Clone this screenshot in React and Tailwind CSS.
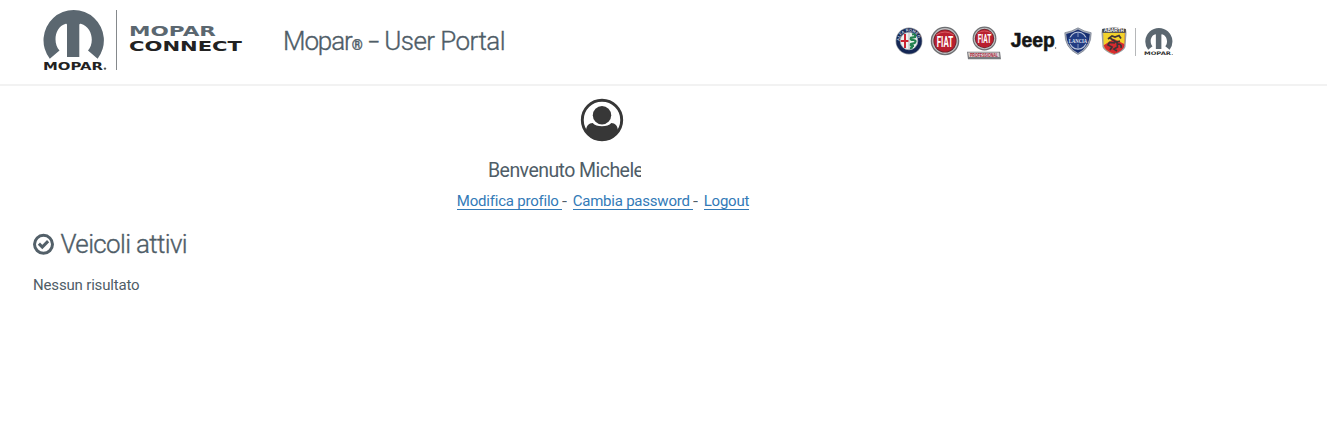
const MoparMark = ({ className }) => (
  <svg viewBox="0 0 62 49" className={className} fill="#5b6770">
    <path d="M6.8 48.7A30.2 30.2 0 1 1 54.6 48.7L45 40.5C51.5 34 50 17 37.8 13.7Q36.3 13.4 36.3 15V47H24V15Q24 13.4 22.8 13.7C11 17 10 34 16.5 40.5Z" />
  </svg>
);

function MoparConnectLogo() {
  return (
    <div className="flex h-[62px] w-[202px] shrink-0">
      <div className="w-[66px]">
        <MoparMark className="block h-[49px] w-[62px]" />
        <svg viewBox="0 0 66 13" className="block h-[13px] w-[66px] overflow-visible">
          <text x="0" y="11" textLength="60" lengthAdjust="spacingAndGlyphs" fontFamily="DejaVu Sans" fontWeight="bold" fontSize="9.6" fill="#222">MOPAR</text>
          <circle cx="62" cy="9.6" r="1.2" fill="#555" />
        </svg>
      </div>
      <div className="ml-[7px] h-[60px] w-px bg-[#85898c]" />
      <svg viewBox="0 0 116 62" className="ml-3 h-[62px] w-[116px] shrink-0" fontFamily="DejaVu Sans" fontWeight="bold">
        <text x="0" y="26.3" textLength="87" lengthAdjust="spacingAndGlyphs" fontSize="14.6" fill="#5b6770">MOPAR</text>
        <text x="0" y="41" textLength="113" lengthAdjust="spacingAndGlyphs" fontSize="14.3" fill="#222">CONNECT</text>
      </svg>
    </div>
  );
}

const AlfaRomeo = () => (
  <svg viewBox="0 0 28 28" className="h-7 w-7 overflow-visible">
    <circle cx="14" cy="14" r="13.4" fill="#8e949d" />
    <circle cx="14" cy="14" r="12.7" fill="#142755" />
    <path id="alfa-arc" d="M4.5 14A9.5 9.5 0 0 1 23.5 14" fill="none" />
    <text fontFamily="Liberation Sans" fontWeight="bold" fontSize="3.9" fill="#c9d0dc" textLength="27">
      <textPath href="#alfa-arc">ALFA ROMEO</textPath>
    </text>
    <circle cx="14" cy="14" r="8.8" fill="#edf1ef" stroke="#a7adb5" strokeWidth=".7" />
    <path d="M10 7V21M5.8 14H13.5" stroke="#cb2532" strokeWidth="2" />
    <path d="M14 5.2V22.8" stroke="#8b9297" strokeWidth=".5" />
    <path d="M17 7.5Q21 6.5 20 10L16 10.8Q14.8 13 18.2 13Q22.2 13.3 19.6 16L16 17Q14.8 19.2 19 18.8M18 20.4Q15.5 20 16 22" fill="none" stroke="#23814f" strokeWidth="2.2" />
  </svg>
);

function FiatBadge({ className }) {
  return (
    <svg viewBox="0 0 30 30" className={className}>
      <circle cx="15" cy="15" r="14.3" fill="#6d6f72" />
      <circle cx="15" cy="15" r="12.9" fill="#bfc1c3" />
      <circle cx="15" cy="15" r="11.6" fill="#69252c" />
      <circle cx="15" cy="15" r="10.7" fill="#b91f2e" />
      <path d="M6 9Q15 3 24 9" fill="none" stroke="#d75c62" />
      <text x="6.8" y="20.8" textLength="16.4" lengthAdjust="spacingAndGlyphs" fontFamily="Roboto" fontWeight="bold" fontSize="15.5" fill="#fff">FIAT</text>
    </svg>
  );
}

const FiatProfessional = () => (
  <div className="flex w-9 flex-col items-center">
    <FiatBadge className="h-[25px] w-[25px] overflow-visible" />
    <svg viewBox="0 0 36 9" className="h-[9px] w-9 overflow-visible">
      <path d="M1 .7H34L35 8.3H2Z" fill="#77797d" />
      <path d="M2 1.4H33L33.5 6H3Z" fill="#d8cdd0" />
      <text x="4" y="5.7" textLength="28" lengthAdjust="spacingAndGlyphs" fontFamily="Liberation Sans" fontWeight="bold" fontSize="5.4" fill="#a92437">PROFESSIONAL</text>
    </svg>
  </div>
);

const Jeep = () => (
  <svg viewBox="0 0 47 28" className="h-7 w-[47px] overflow-visible">
    <text x=".8" y="19.8" textLength="44" lengthAdjust="spacingAndGlyphs" fontFamily="Liberation Sans" fontWeight="bold" fontSize="19.6" fill="#151515" stroke="#151515" strokeWidth=".6">Jeep</text>
    <circle cx="45.6" cy="21" r=".7" fill="#555" />
  </svg>
);

const Lancia = () => (
  <svg viewBox="0 0 28 28" className="h-7 w-7 overflow-visible">
    <path d="M.8 5.7Q8 4.5 14 .8Q20 4.5 27.2 5.7Q27.5 21 14 27.5Q.5 21 .8 5.7Z" fill="#a4abb8" stroke="#6b7384" strokeWidth=".6" />
    <path d="M2.2 7Q9 5.5 14 2.4Q19 5.5 25.8 7Q25.5 20 14 26Q2.5 20 2.2 7Z" fill="#172e70" />
    <circle cx="14" cy="13.7" r="8.5" fill="#213c82" stroke="#b8c3d9" strokeWidth="1.2" />
    <path d="M14 5V10M14 17V23" stroke="#91a2c7" strokeWidth=".9" />
    <path d="M4 10.5H24V16.7H4Z" fill="#213c82" />
    <text x="4.8" y="16" textLength="18.4" lengthAdjust="spacingAndGlyphs" fontFamily="Liberation Serif" fontWeight="bold" fontSize="7" fill="#e1e8f2">LANCIA</text>
  </svg>
);

const Abarth = () => (
  <svg viewBox="0 0 28 29" className="h-[29px] w-7 overflow-visible">
    <path d="M2 2Q14-1 26 2L26.5 6L25.5 20Q24 24.5 14 28Q4 24.5 2.5 20L1.5 6Z" fill="#9a9da0" />
    <path d="M3.2 5.7H14V26.8Q5 24 3.8 19Z" fill="#f3d32b" />
    <path d="M14 5.7H24.8L24.2 19Q23 24 14 26.8Z" fill="#d72b2f" />
    <path d="M3.7 18.2L14 11.8L24.3 18.2Q23 24 14 26.8Q5 24 3.7 18.2Z" fill="#d72b2f" />
    <path d="M14 5.7H24.8L24.3 17L14 12Z" fill="#f3d32b" />
    <path d="M2.3 2Q14-.5 25.7 2V5.8H2.3Z" fill="#444" />
    <text x="4" y="5.2" textLength="20" lengthAdjust="spacingAndGlyphs" fontFamily="Liberation Sans" fontWeight="bold" fontSize="4.7" fill="#fff">ABARTH</text>
    <path d="M8 12L12 9L15 10L19 8.5L21 11.5M10 11L16 15L20 14M17 15L17.5 20L14 22L17 24M15 16L9.5 15.5L8 18L12 20L10 23M18 17Q22 17 21 21" fill="none" stroke="#403536" strokeWidth="1.7" />
  </svg>
);

const BrandStrip = () => (
  <div className="mt-[27px] ml-auto mr-[154px] flex h-9 shrink-0 items-start">
    <AlfaRomeo />
    <FiatBadge className="-mt-px ml-[7px] h-[30px] w-[30px] overflow-visible" />
    <div className="ml-[6px] -mt-px"><FiatProfessional /></div>
    <div className="ml-2"><Jeep /></div>
    <div className="ml-[7px]"><Lancia /></div>
    <div className="ml-2"><Abarth /></div>
    <div className="ml-[7px] mt-px h-7 w-px bg-[#b5b7b9]" />
    <div className="ml-2 mt-px w-[29px]">
      <MoparMark className="mx-auto block h-[22px] w-7" />
      <svg viewBox="0 0 29 6" className="block h-[6px] w-[29px] overflow-visible">
        <text x="0" y="5" textLength="27" lengthAdjust="spacingAndGlyphs" fontFamily="DejaVu Sans" fontWeight="bold" fontSize="4.9" fill="#333">MOPAR</text>
        <circle cx="28.2" cy="4.5" r=".5" fill="#555" />
      </svg>
    </div>
  </div>
);

const UserIcon = () => (
  <svg viewBox="0 0 44 44" className="mr-0.5 h-11 w-11" fill="#373737">
    <circle cx="22" cy="22" r="19.7" fill="none" stroke="#373737" strokeWidth="2.9" />
    <circle cx="22" cy="17.3" r="9.2" />
    <path d="M6 32.3C6.5 28 8.7 25 12.7 25C14.5 27.3 18 28.3 22 28.3S29.5 27.3 31.3 25C35.3 25 37.5 28 38 32.3Q34 42.5 22 42.8Q10 42.5 6 32.3Z" />
  </svg>
);

const CheckCircle = () => (
  <svg viewBox="0 0 22 22" className="h-[22px] w-[22px]" fill="none" stroke="#536069">
    <circle cx="11.5" cy="11.3" r="9" strokeWidth="3" />
    <path d="M6.9 10.6L10.3 14L16.1 8.2" strokeWidth="3.1" />
  </svg>
);

const linkClass = "whitespace-pre border-b border-[#337ab7] text-[#337ab7]";

export default function App() {
  return (
    <div className="h-[436px] overflow-hidden bg-white font-['Roboto',sans-serif] text-[#4f5d67]">
      <header className="flex h-[86px] border-b-2 border-[#f2f2f2] pl-[43px]">
        <div className="pt-[10px]"><MoparConnectLogo /></div>
        <h1 className="mt-[25px] ml-[38px] text-[26px] leading-8 font-light tracking-[-0.55px] whitespace-nowrap [-webkit-text-stroke:0.35px]">
          <span className="tracking-[-1.1px]">Mopar</span>
          <span className="text-[14px] font-medium tracking-normal">®</span>{" "}
          <span className="mr-[2px] ml-px inline-block scale-x-150">-</span> User Portal
        </h1>
        <BrandStrip />
      </header>

      <section className="flex w-[1206px] flex-col items-center pt-3">
        <UserIcon />
        <div className="mt-[15px] mb-px w-[230px]">
          <p className="w-[152.5px] overflow-hidden text-[19.5px] leading-7 tracking-[-0.55px] whitespace-nowrap">Benvenuto Michele</p>
        </div>
        <nav className="mt-[9px] flex h-[15px] text-[15px] leading-[13px] tracking-[-0.22px]">
          <a href="#" className={linkClass}>Modifica profilo </a>
          <span className="w-[10.5px] origin-left scale-x-120">-</span>
          <a href="#" className={linkClass}>Cambia password </a>
          <span className="w-[10.5px] origin-left scale-x-120">-</span>
          <a href="#" className={linkClass}>Logout</a>
        </nav>
      </section>

      <main className="pt-[18px] pl-8">
        <h2 className="flex h-8 items-center gap-[6.5px] text-[26px] leading-8 font-light tracking-[-0.65px] [-webkit-text-stroke:0.35px]">
          <CheckCircle />
          <span>Veicoli attivi</span>
        </h2>
        <p className="mt-[15px] ml-px text-[15px] leading-5 tracking-[-0.17px]">Nessun risultato</p>
      </main>
    </div>
  );
}
